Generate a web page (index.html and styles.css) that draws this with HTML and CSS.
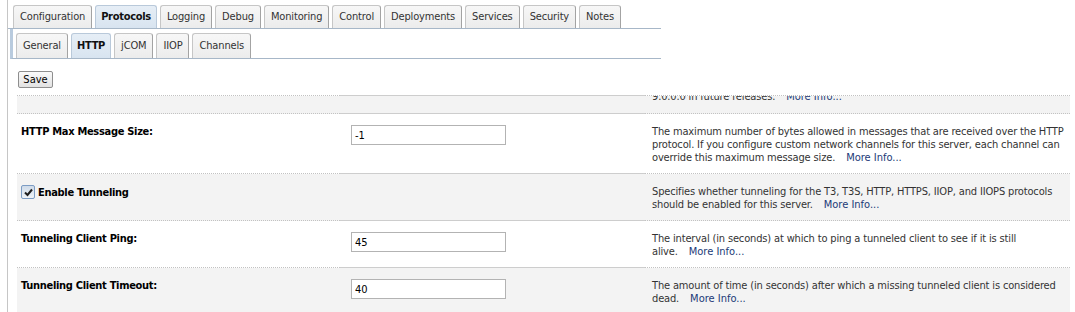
FILE: index.html
```html
<!DOCTYPE html>
<html lang="en">
<head>
    <meta charset="UTF-8">
    <title>Settings for Server | Protocols | HTTP</title>
    <link rel="stylesheet" href="styles.css">
</head>
<body>
    <div class="console">
        <ul class="tabs main-tabs">
            <li>Configuration</li>
            <li class="active">Protocols</li>
            <li>Logging</li>
            <li>Debug</li>
            <li>Monitoring</li>
            <li>Control</li>
            <li>Deployments</li>
            <li>Services</li>
            <li>Security</li>
            <li>Notes</li>
        </ul>
        <div class="subpanel">
            <ul class="tabs sub-tabs">
                <li>General</li>
                <li class="active">HTTP</li>
                <li>jCOM</li>
                <li>IIOP</li>
                <li>Channels</li>
            </ul>
        </div>
        <div class="toolbar">
            <button type="button">Save</button>
        </div>

        <table class="settings">
            <tr class="shaded clipped">
                <td class="label"></td>
                <td class="field"></td>
                <td class="desc"><div class="clip"><p>9.0.0.0 in future <span class="tail">releases. <a href="#">More Info...</a></span></p></div></td>
            </tr>
            <tr>
                <td class="label">HTTP Max Message Size:</td>
                <td class="field"><input type="text" value="-1"></td>
                <td class="desc">The maximum number of bytes allowed in messages that are received over the HTTP protocol. If you configure custom network channels for this server, each channel can override this maximum message <span class="tail">size. <a href="#">More Info...</a></span></td>
            </tr>
            <tr class="shaded">
                <td class="label">
                    <label class="check"><span class="box"><svg width="9" height="9" viewBox="0 0 9 9"><path d="M1 4.5 L3.5 7 L8 1.5" fill="none" stroke="#1e1e1e" stroke-width="2"/></svg></span>Enable Tunneling</label>
                </td>
                <td class="field"></td>
                <td class="desc">Specifies whether tunneling for the T3, T3S, HTTP, HTTPS, IIOP, and IIOPS protocols should be enabled for this <span class="tail">server. <a href="#">More Info...</a></span></td>
            </tr>
            <tr>
                <td class="label">Tunneling Client Ping:</td>
                <td class="field"><input type="text" value="45"></td>
                <td class="desc">The interval (in seconds) at which to ping a tunneled client to see if it is still <span class="tail">alive. <a href="#">More Info...</a></span></td>
            </tr>
            <tr class="shaded">
                <td class="label">Tunneling Client Timeout:</td>
                <td class="field"><input type="text" value="40"></td>
                <td class="desc">The amount of time (in seconds) after which a missing tunneled client is considered <span class="tail">dead. <a href="#">More Info...</a></span></td>
            </tr>
        </table>
    </div>
</body>
</html>
```

FILE: styles.css
```css
* {
    box-sizing: border-box;
}

body {
    margin: 0;
    font-family: "DejaVu Sans Condensed", "DejaVu Sans", sans-serif;
    font-size: 11px;
    color: #333;
    background: #fff;
}

.console {
    margin-left: 7px;
    border-left: 1px solid #c6c6c6;
    height: 312px;
    overflow: hidden;
}

/* tabs */
.tabs {
    list-style: none;
    margin: 0;
    padding: 0;
    display: flex;
    gap: 3px;
    letter-spacing: -0.15px;
}

.tabs li {
    padding: 0 6px;
    border: 1px solid #c6c6c6;
    border-right-color: #a3a3a3;
    border-bottom: none;
    border-radius: 3px 3px 0 0;
    background: linear-gradient(#f7f7f7, #ececec);
    color: #333;
}

.tabs li.active {
    padding: 0 5px;
    background: linear-gradient(#e6eef6, #d8e4f0);
    border-color: #b9c9da;
    font-weight: bold;
    letter-spacing: -0.3px;
    color: #111;
}

.main-tabs {
    width: 653px;
    padding: 5px 0 0 5px;
    border-bottom: 1px solid #a7b7c8;
}

.main-tabs li {
    height: 23px;
    line-height: 22px;
}

.subpanel {
    width: 651px;
    margin-left: 2px;
    padding: 4px 0 0 3px;
    border-left: 3px solid #b9cbde;
    border-bottom: 1px solid #a7b7c8;
}

.sub-tabs li {
    height: 25px;
    line-height: 24px;
}

/* save bar */
.toolbar {
    height: 36px;
    padding: 12px 0 0 10px;
}

.toolbar button {
    width: 35px;
    height: 17px;
    padding: 0;
    font: inherit;
    color: #000;
    background: linear-gradient(#fafafa, #e2e2e2);
    border: 1px solid #8e8e8e;
    border-radius: 2px;
}

/* settings table */
.settings {
    margin-left: 9px;
    width: 1053px;
    border-collapse: collapse;
    letter-spacing: -0.15px;
}

.settings td {
    vertical-align: top;
    border-top: 1px dotted #c2c2c2;
}

.settings tr.shaded {
    background: #f3f3f3;
}

.settings .label {
    width: 323px;
    padding: 11px 0 9px 4px;
    font-weight: bold;
    color: #000;
    line-height: 13px;
    letter-spacing: -0.3px;
}

.settings .field {
    width: 305px;
    padding: 11px 0 0 11px;
    border-top-style: solid;
    border-top-color: #cdcdcd;
}

.settings .desc {
    padding: 11px 0 9px 7px;
    line-height: 13px;
}

.settings tr.clipped td {
    height: 18px;
    padding: 0 0 0 7px;
}

.clip {
    height: 17px;
    overflow: hidden;
}

.clip p {
    margin: -6px 0 0;
}

.tail {
    white-space: nowrap;
}

.settings a {
    color: #1c3a78;
    text-decoration: none;
    margin-left: 8px;
    letter-spacing: 0;
}

.settings input {
    width: 155px;
    height: 20px;
    padding: 0 3px;
    border: 1px solid #b3b3b3;
    font: inherit;
    color: #000;
}

.check {
    display: inline-flex;
    align-items: center;
    gap: 3px;
}

.check .box {
    width: 14px;
    height: 14px;
    display: flex;
    align-items: center;
    justify-content: center;
    border: 1px solid #7c9cc4;
    border-radius: 2px;
    background: linear-gradient(#cfdbe9, #eef3f8);
}
```
